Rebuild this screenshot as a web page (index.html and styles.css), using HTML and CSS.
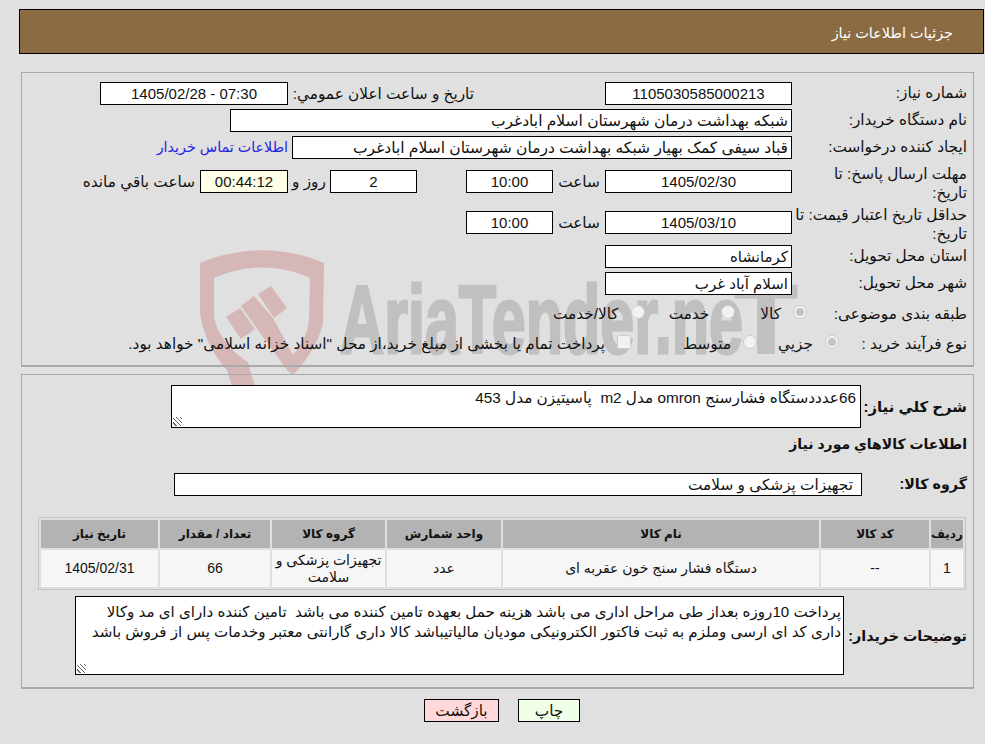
FILE: index.html
```html
<!DOCTYPE html>
<html lang="fa">
<head>
<meta charset="utf-8">
<title>جزئیات اطلاعات نیاز</title>
<link rel="stylesheet" href="styles.css">
</head>
<body>
<svg class="watermark" width="610" height="136" viewBox="0 0 610 136" aria-hidden="true">
  <path class="wm-red" d="M0 13 C40 -4 85 -4 124 13 L123 73 C118 95 105 112 93 125 L87 120 L58 80 L41 56 L54 46 L73 68 L93 105 C102 95 108 82 109 70 L110 28 C80 14 45 14 14 28 L14 67 C16 78 21 86 27 93 C33 101 40 107 48 112 L50 120 L55 136 L32 136 L27 120 C13 105 3 85 0 63Z"/>
  <path class="wm-red" d="M26 67 L40 58 L55 79 L41 89Z M58 44 L71 36 L87 58 L74 68Z"/>
  <text class="wm-text" x="140" y="103" textLength="403" lengthAdjust="spacingAndGlyphs">AriaTender.ne</text>
  <text class="wm-text" x="535" y="103" textLength="62" lengthAdjust="spacingAndGlyphs">T</text>
</svg>
<header class="title-bar">جزئیات اطلاعات نیاز</header>

<section class="panel panel-main">
  <div class="row row-1">
    <div class="label">شماره نیاز:</div>
    <div class="box box-date">1105030585000213</div>
    <div class="text pub-label">تاریخ و ساعت اعلان عمومي:</div>
    <div class="box box-pub">07:30 - 1405/02/28</div>
  </div>
  <div class="row row-2">
    <div class="label">نام دستگاه خریدار:</div>
    <div class="box box-buyer start">شبکه بهداشت درمان شهرستان اسلام ابادغرب</div>
  </div>
  <div class="row row-3">
    <div class="label">ایجاد کننده درخواست:</div>
    <div class="box box-creator start">قباد سیفی کمک بهیار شبکه بهداشت درمان شهرستان اسلام ابادغرب</div>
    <a class="contact" href="#">اطلاعات تماس خریدار</a>
  </div>
  <div class="row row-4">
    <div class="label">مهلت ارسال پاسخ: تا تاریخ:</div>
    <div class="box box-date">1405/02/30</div>
    <div class="text hour-label">ساعت</div>
    <div class="box box-time">10:00</div>
    <div class="box box-days">2</div>
    <div class="text day-label">روز و</div>
    <div class="box box-left">00:44:12</div>
    <div class="text left-label">ساعت باقي مانده</div>
  </div>
  <div class="row row-5">
    <div class="label">حداقل تاریخ اعتبار قیمت: تا تاریخ:</div>
    <div class="box box-date">1405/03/10</div>
    <div class="text hour-label">ساعت</div>
    <div class="box box-time">10:00</div>
  </div>
  <div class="row row-6">
    <div class="label">استان محل تحویل:</div>
    <div class="box box-date start">کرمانشاه</div>
  </div>
  <div class="row row-7">
    <div class="label">شهر محل تحویل:</div>
    <div class="box box-date start">اسلام آباد غرب</div>
  </div>
  <div class="row row-8">
    <div class="label">طبقه بندی موضوعی:</div>
    <div class="choices">
      <span class="radio on"></span><span class="choice c-kala">کالا</span>
      <span class="radio"></span><span class="choice c-khadamat">خدمت</span>
      <span class="radio"></span><span class="choice">کالا/خدمت</span>
    </div>
  </div>
  <div class="row row-9">
    <div class="label">نوع فرآیند خرید :</div>
    <div class="choices">
      <span class="radio on"></span><span class="choice c-jozi">جزیي</span>
      <span class="radio"></span><span class="choice c-mot">متوسط</span>
      <span class="check"></span><span class="choice">پرداخت تمام یا بخشی از مبلغ خرید،از محل "اسناد خزانه اسلامی" خواهد بود.</span>
    </div>
  </div>
</section>

<section class="panel panel-detail">
  <div class="row desc-row">
    <div class="label strong">شرح کلي نیاز:</div>
    <div class="area area-desc">66عدددستگاه فشارسنج omron مدل m2&nbsp; پاسیتیزن مدل 453</div>
  </div>
  <h2 class="section-title">اطلاعات کالاهاي مورد نیاز</h2>
  <div class="row group-row">
    <div class="label strong">گروه کالا:</div>
    <div class="box box-group">تجهیزات پزشکی و سلامت</div>
  </div>
  <table class="items">
    <thead>
      <tr><th class="c1">ردیف</th><th class="c2">کد کالا</th><th class="c3">نام کالا</th><th class="c4">واحد شمارش</th><th class="c5">گروه کالا</th><th class="c6">تعداد / مقدار</th><th class="c7">تاریخ نیاز</th></tr>
    </thead>
    <tbody>
      <tr><td>1</td><td>--</td><td>دستگاه فشار سنج خون عقربه ای</td><td>عدد</td><td>تجهیزات پزشکی و سلامت</td><td>66</td><td>1405/02/31</td></tr>
    </tbody>
  </table>
  <div class="row notes-row">
    <div class="notes-label">توضیحات خریدار:</div>
    <div class="area area-notes">پرداخت 10روزه بعداز طی مراحل اداری می باشد هزینه حمل بعهده تامین کننده می باشد&nbsp; تامین کننده دارای ای مد وکالا دارى کد ای ارسى وملزم به ثبت فاکتور الکترونیکی مودیان مالیاتیباشد کالا داری گارانتی معتبر وخدمات پس از فروش باشد</div>
  </div>
</section>

<div class="actions">
  <button class="btn btn-print" type="button">چاپ</button>
  <button class="btn btn-back" type="button">بازگشت</button>
</div>
</body>
</html>
```

FILE: styles.css
```css
* { box-sizing: border-box; }
html, body { margin: 0; padding: 0; }
body {
  position: relative;
  height: 744px;
  overflow: hidden;
  background: #e0e0e0;
  color: #111;
  direction: rtl;
  font-family: "Liberation Sans", "DejaVu Sans", sans-serif;
  font-size: 15.3px;
  padding-top: 9px;
}
.watermark { position: absolute; left: 200px; top: 250px; direction: ltr; }
.wm-red { fill: #d6b7b7; }
.wm-text { fill: #c0c0c0; stroke: #c0c0c0; stroke-width: 3px; font-family: "Liberation Sans", sans-serif; font-weight: 700; font-size: 97px; direction: ltr; }
.title-bar {
  position: relative;
  height: 45px;
  margin-left: 19px;
  margin-right: 1px;
  padding: 13px 30px 0 0;
  background: #8b6c42;
  border: 1px solid #000;
  color: #fff;
  font-size: 14.4px;
  line-height: 20px;
}
.panel { position: relative; margin-left: 21px; margin-right: 11px; border: 1px solid #a9a9a9; border-bottom-width: 2px; padding-right: 6px; }
.panel-main { height: 295px; margin-top: 18px; padding-top: 9px; }
.panel-detail { height: 315px; margin-top: 7px; padding-top: 10px; }
.row { display: flex; align-items: flex-start; }
.label { width: 175px; flex: none; padding-left: 6px; line-height: 22px; }
.label.strong { font-weight: 700; font-size: 14.3px; }
.box, .area {
  flex: none;
  background: #fff;
  border: 1px solid #000;
  text-align: center;
}
.box { height: 23px; font-size: 15px; line-height: 21px; }
.start { text-align: right; padding-right: 3px; font-size: 15.5px; }
.box-date.start { font-size: 15px; }
.text { flex: none; line-height: 23px; }
.box-date { width: 187px; }
.box-time, .box-days { width: 87px; }
.box-left { width: 88px; background: #ffffe8; }
.box-pub { width: 188px; margin-right: 5px; }
.pub-label { margin-right: 131px; width: 181px; white-space: nowrap; }
.box-buyer { width: 562px; }
.box-creator { width: 500px; }
.contact { margin-right: 4px; color: #2222e6; line-height: 23px; text-decoration: none; font-size: 14.3px; white-space: nowrap; }
.row-1 { height: 27px; }
.row-2 { height: 27px; }
.row-3 { height: 34px; }
.row-4 { height: 41px; }
.row-4 .label, .row-5 .label { margin-top: -6px; line-height: 19px; }
.row-5 { height: 34px; }
.row-5 .label { padding-left: 0; }
.row-6 { height: 27px; }
.row-7 { height: 27px; }
.hour-label { width: 52px; text-align: center; }
.box-days { margin-right: 49px; }
.day-label { width: 42px; text-align: center; }
.left-label { margin-right: 5px; white-space: nowrap; }
.row-8 { height: 30px; padding-top: 8px; margin-top: -4px; }
.row-8 .label { width: 160px; }
.row-9 { padding-top: 8px; }
.row-9 .label { width: 128px; padding-left: 0; }
.choices { display: flex; align-items: center; height: 22px; }
.radio, .check { flex: none; width: 14px; height: 14px; margin-top: -4px; background: #f2f2f2; border: 1px solid #cdcdcd; }
.radio { border-radius: 50%; }
.radio.on { background: radial-gradient(circle, #c4c4c4 0 3.5px, #f2f2f2 4.5px); }
.check { border-radius: 2px; }
.choice { flex: none; margin-right: 12px; white-space: nowrap; }
.c-kala { margin-left: 25px; }
.c-khadamat { margin-left: 24px; }
.c-jozi { margin-left: 21px; }
.c-mot { margin-left: 52px; }
.area { text-align: right; position: relative; padding: 1px 3px; }
.area::after {
  content: "";
  position: absolute;
  left: 1px;
  bottom: 1px;
  width: 9px;
  height: 9px;
  background: repeating-linear-gradient(45deg, transparent 0 2px, #666 2px 3px);
}
.desc-row .label { width: 106px; margin-top: 11px; font-size: 14.9px; padding-left: 0; }
.area-desc { width: 690px; height: 43px; padding-right: 4px; line-height: 22px; }
.section-title { margin: 5px 0 0; font-size: 14px; font-weight: 700; line-height: 22px; }
.group-row { margin-top: 18px; }
.group-row .label { width: 105px; }
.box-group { width: 688px; text-align: right; padding-right: 8px; font-size: 15.3px; }
.items {
  width: 928px;
  margin: 21px 1px 0 0;
  border: 1px solid #c4c4c4;
  border-spacing: 2px;
  table-layout: fixed;
  font-size: 14px;
}
.items th { height: 28px; padding: 0; background: #b3b3b3; font-weight: 700; font-size: 12px; }
.items td { height: 37px; padding: 0; background: #f6f6f6; text-align: center; line-height: 17px; }
.c1 { width: 32px; }
.c2 { width: 108px; }
.c3 { width: 316px; }
.c4 { width: 114px; }
.c5 { width: 113px; }
.c6 { width: 110px; }
.c7 { width: 117px; }
.notes-row { margin-top: 6px; }
.notes-label { width: 123px; flex: none; padding-top: 29px; line-height: 22px; font-weight: 700; font-size: 14.3px; }
.area-notes { width: 769px; height: 79px; padding: 5px 2px 1px; font-size: 15.1px; line-height: 20px; }
.actions { display: flex; justify-content: center; gap: 19px; margin-top: 10px; padding-left: 19px; }
.btn { width: 62px; height: 23px; padding: 0; border: 1px solid #000; color: #111; font-family: "Liberation Sans", "DejaVu Sans", sans-serif; font-size: 15.3px; }
.btn-print { background: #efffe8; }
.btn-back { width: 75px; background: #ffd9d9; }
```
